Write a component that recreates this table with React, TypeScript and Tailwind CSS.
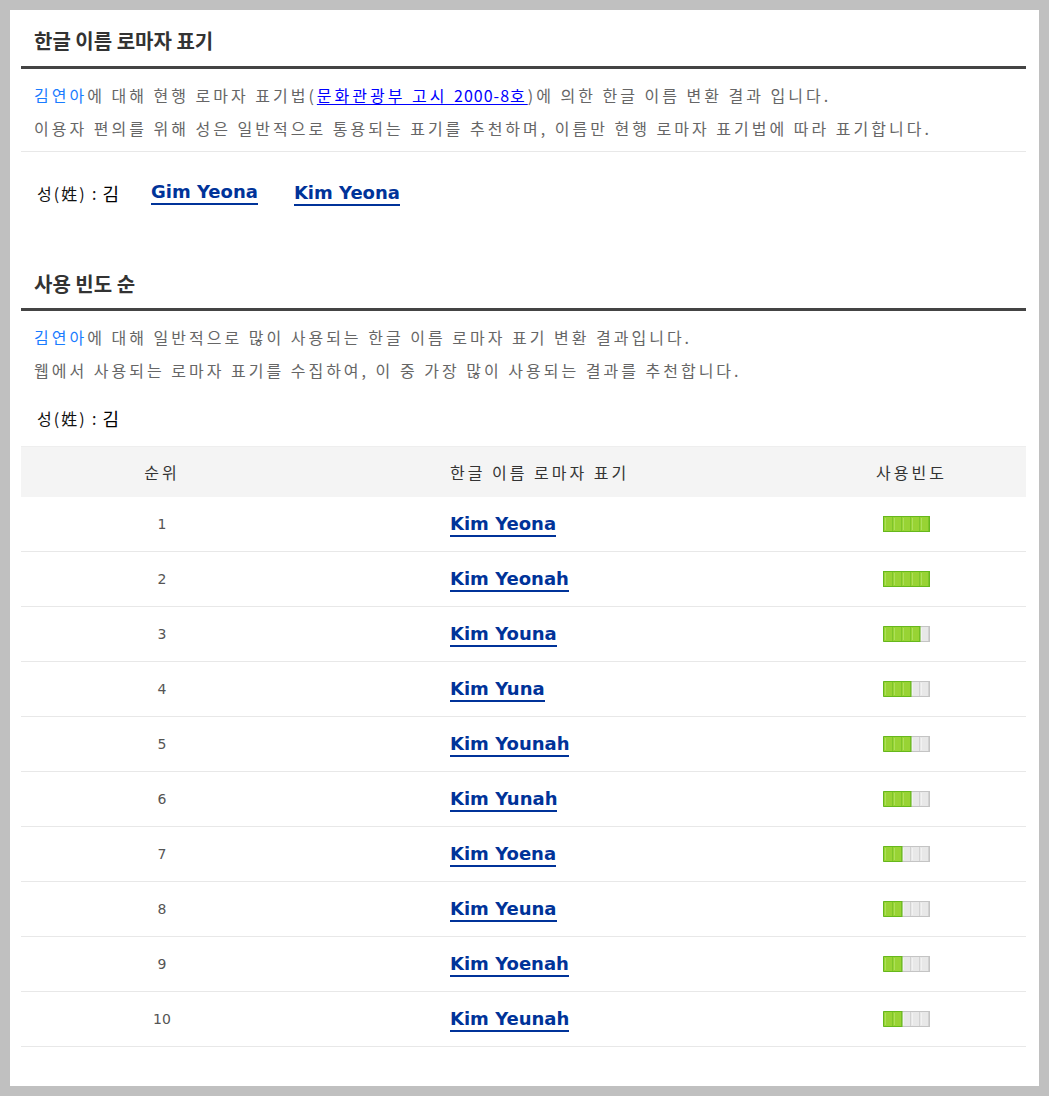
import React from "react";

const KR = { fontFamily: '"Noto Sans CJK KR", "Noto Sans", sans-serif' };
const LAT = { fontFamily: '"DejaVu Sans", Verdana, sans-serif' };

function Bar({ n }: { n: number }) {
  const cells = [0, 1, 2, 3, 4];
  const gw = n * 9 + 1;
  return (
    <svg width="47" height="16" viewBox="0 0 47 16">
      {cells.map((i) => {
        const on = i < n;
        const x = 1 + i * 9;
        return (
          <g key={i}>
            <rect x={x} y={1} width={9} height={14} fill={on ? "#98d334" : "#e8e8e8"} />
            <rect x={x + 1} y={2} width={1} height={12} fill={on ? "#ace05a" : "#f2f2f2"} />
            <rect x={x + 8} y={1} width={1} height={14} fill={on ? "#7ec52a" : "#d2d2d2"} />
          </g>
        );
      })}
      <rect x={0.5} y={0.5} width={46} height={15} fill="none" stroke="#c4c4c4" />
      <path d={`M${gw} 0.5 H0.5 V15.5 H${gw}`} fill="none" stroke="#66b81c" />
      {n < 5 && <rect x={gw - 0.5} y={0} width={1} height={16} fill="#66b81c" />}
      {n === 5 && <rect x={0.5} y={0.5} width={46} height={15} fill="none" stroke="#66b81c" />}
    </svg>
  );
}

const rows: [string, number][] = [
  ["Kim Yeona", 5],
  ["Kim Yeonah", 5],
  ["Kim Youna", 4],
  ["Kim Yuna", 3],
  ["Kim Younah", 3],
  ["Kim Yunah", 3],
  ["Kim Yoena", 2],
  ["Kim Yeuna", 2],
  ["Kim Yoenah", 2],
  ["Kim Yeunah", 2],
];

function NameLink({ children }: { children: React.ReactNode }) {
  return (
    <span
      style={LAT}
      className="inline-block text-[18px] font-bold leading-[20px] text-[#003399] border-b-2 border-[#003399] pb-[1px]"
    >
      {children}
    </span>
  );
}

function Heading({ children, cls }: { children: React.ReactNode; cls: string }) {
  return (
    <div className={`flex items-center pl-[13px] border-b-[3px] border-[#444444] ${cls}`}>
      <span style={KR} className="text-[20px] font-bold text-[#333333]">
        {children}
      </span>
    </div>
  );
}

function Surname() {
  return (
    <div className="w-[114px] flex items-center shrink-0">
      <span className="text-[16px] text-[#111111] tracking-[2px]">성(姓) : </span>
      <span className="text-[18px] text-black ml-[4px]">김</span>
    </div>
  );
}

export default function App() {
  return (
    <div className="min-h-screen bg-[#c0c0c0] p-[10px]" style={KR}>
      <div className="bg-white h-[1076px] pl-[11px] pr-[13px]">
        <Heading cls="h-[59px] pt-[5px]">한글 이름 로마자 표기</Heading>
        <div className="pl-[13px] pt-[10px] pb-[6px] border-b border-[#e8e8e8] text-[16px] leading-[33px] text-[#666666] tracking-[3px]">
          <div>
            <span className="text-[#1a7cff]">김연아</span>에 대해 현행 로마자 표기법(
            <span className="text-[#0000ff] underline underline-offset-2">
              문화관광부 고시 <span className="tracking-[1px]">2000-8</span>호
            </span>
            )에 의한 한글 이름 변환 결과 입니다.
          </div>
          <div>이용자 편의를 위해 성은 일반적으로 통용되는 표기를 추천하며, 이름만 현행 로마자 표기법에 따라 표기합니다.</div>
        </div>
        <div className="h-[82px] flex items-center pl-[16px]">
          <Surname />
          <NameLink>Gim Yeona</NameLink>
          <span className="ml-[36px]">
            <NameLink>Kim Yeona</NameLink>
          </span>
        </div>
        <Heading cls="h-[77px] pt-[26px]">사용 빈도 순</Heading>
        <div className="pl-[13px] pt-[10px] text-[16px] leading-[33px] text-[#666666] tracking-[3px]">
          <div>
            <span className="text-[#1a7cff]">김연아</span>에 대해 일반적으로 많이 사용되는 한글 이름 로마자 표기 변환 결과입니다.
          </div>
          <div>웹에서 사용되는 로마자 표기를 수집하여, 이 중 가장 많이 사용되는 결과를 추천합니다.</div>
        </div>
        <div className="h-[59px] flex items-center pt-[3px] pl-[16px]">
          <Surname />
        </div>
        <div className="border-t border-[#eeeeee]">
          <div className="h-[50px] bg-[#f4f4f4] flex items-center text-[16px] text-[#333333] tracking-[3px]">
            <div className="w-[282px] text-center">순위</div>
            <div className="w-[494px] pl-[147px]">한글 이름 로마자 표기</div>
            <div className="flex-1 text-center">사용빈도</div>
          </div>
          {rows.map(([name, n], i) => (
            <div key={name} className="h-[55px] flex items-center border-b border-[#e8e8e8]">
              <div style={LAT} className="w-[282px] text-center text-[14px] text-[#555555]">
                {i + 1}
              </div>
              <div className="w-[494px] pl-[147px]">
                <NameLink>{name}</NameLink>
              </div>
              <div className="flex-1 pl-[86px] flex items-center">
                <Bar n={n} />
              </div>
            </div>
          ))}
        </div>
      </div>
    </div>
  );
}
